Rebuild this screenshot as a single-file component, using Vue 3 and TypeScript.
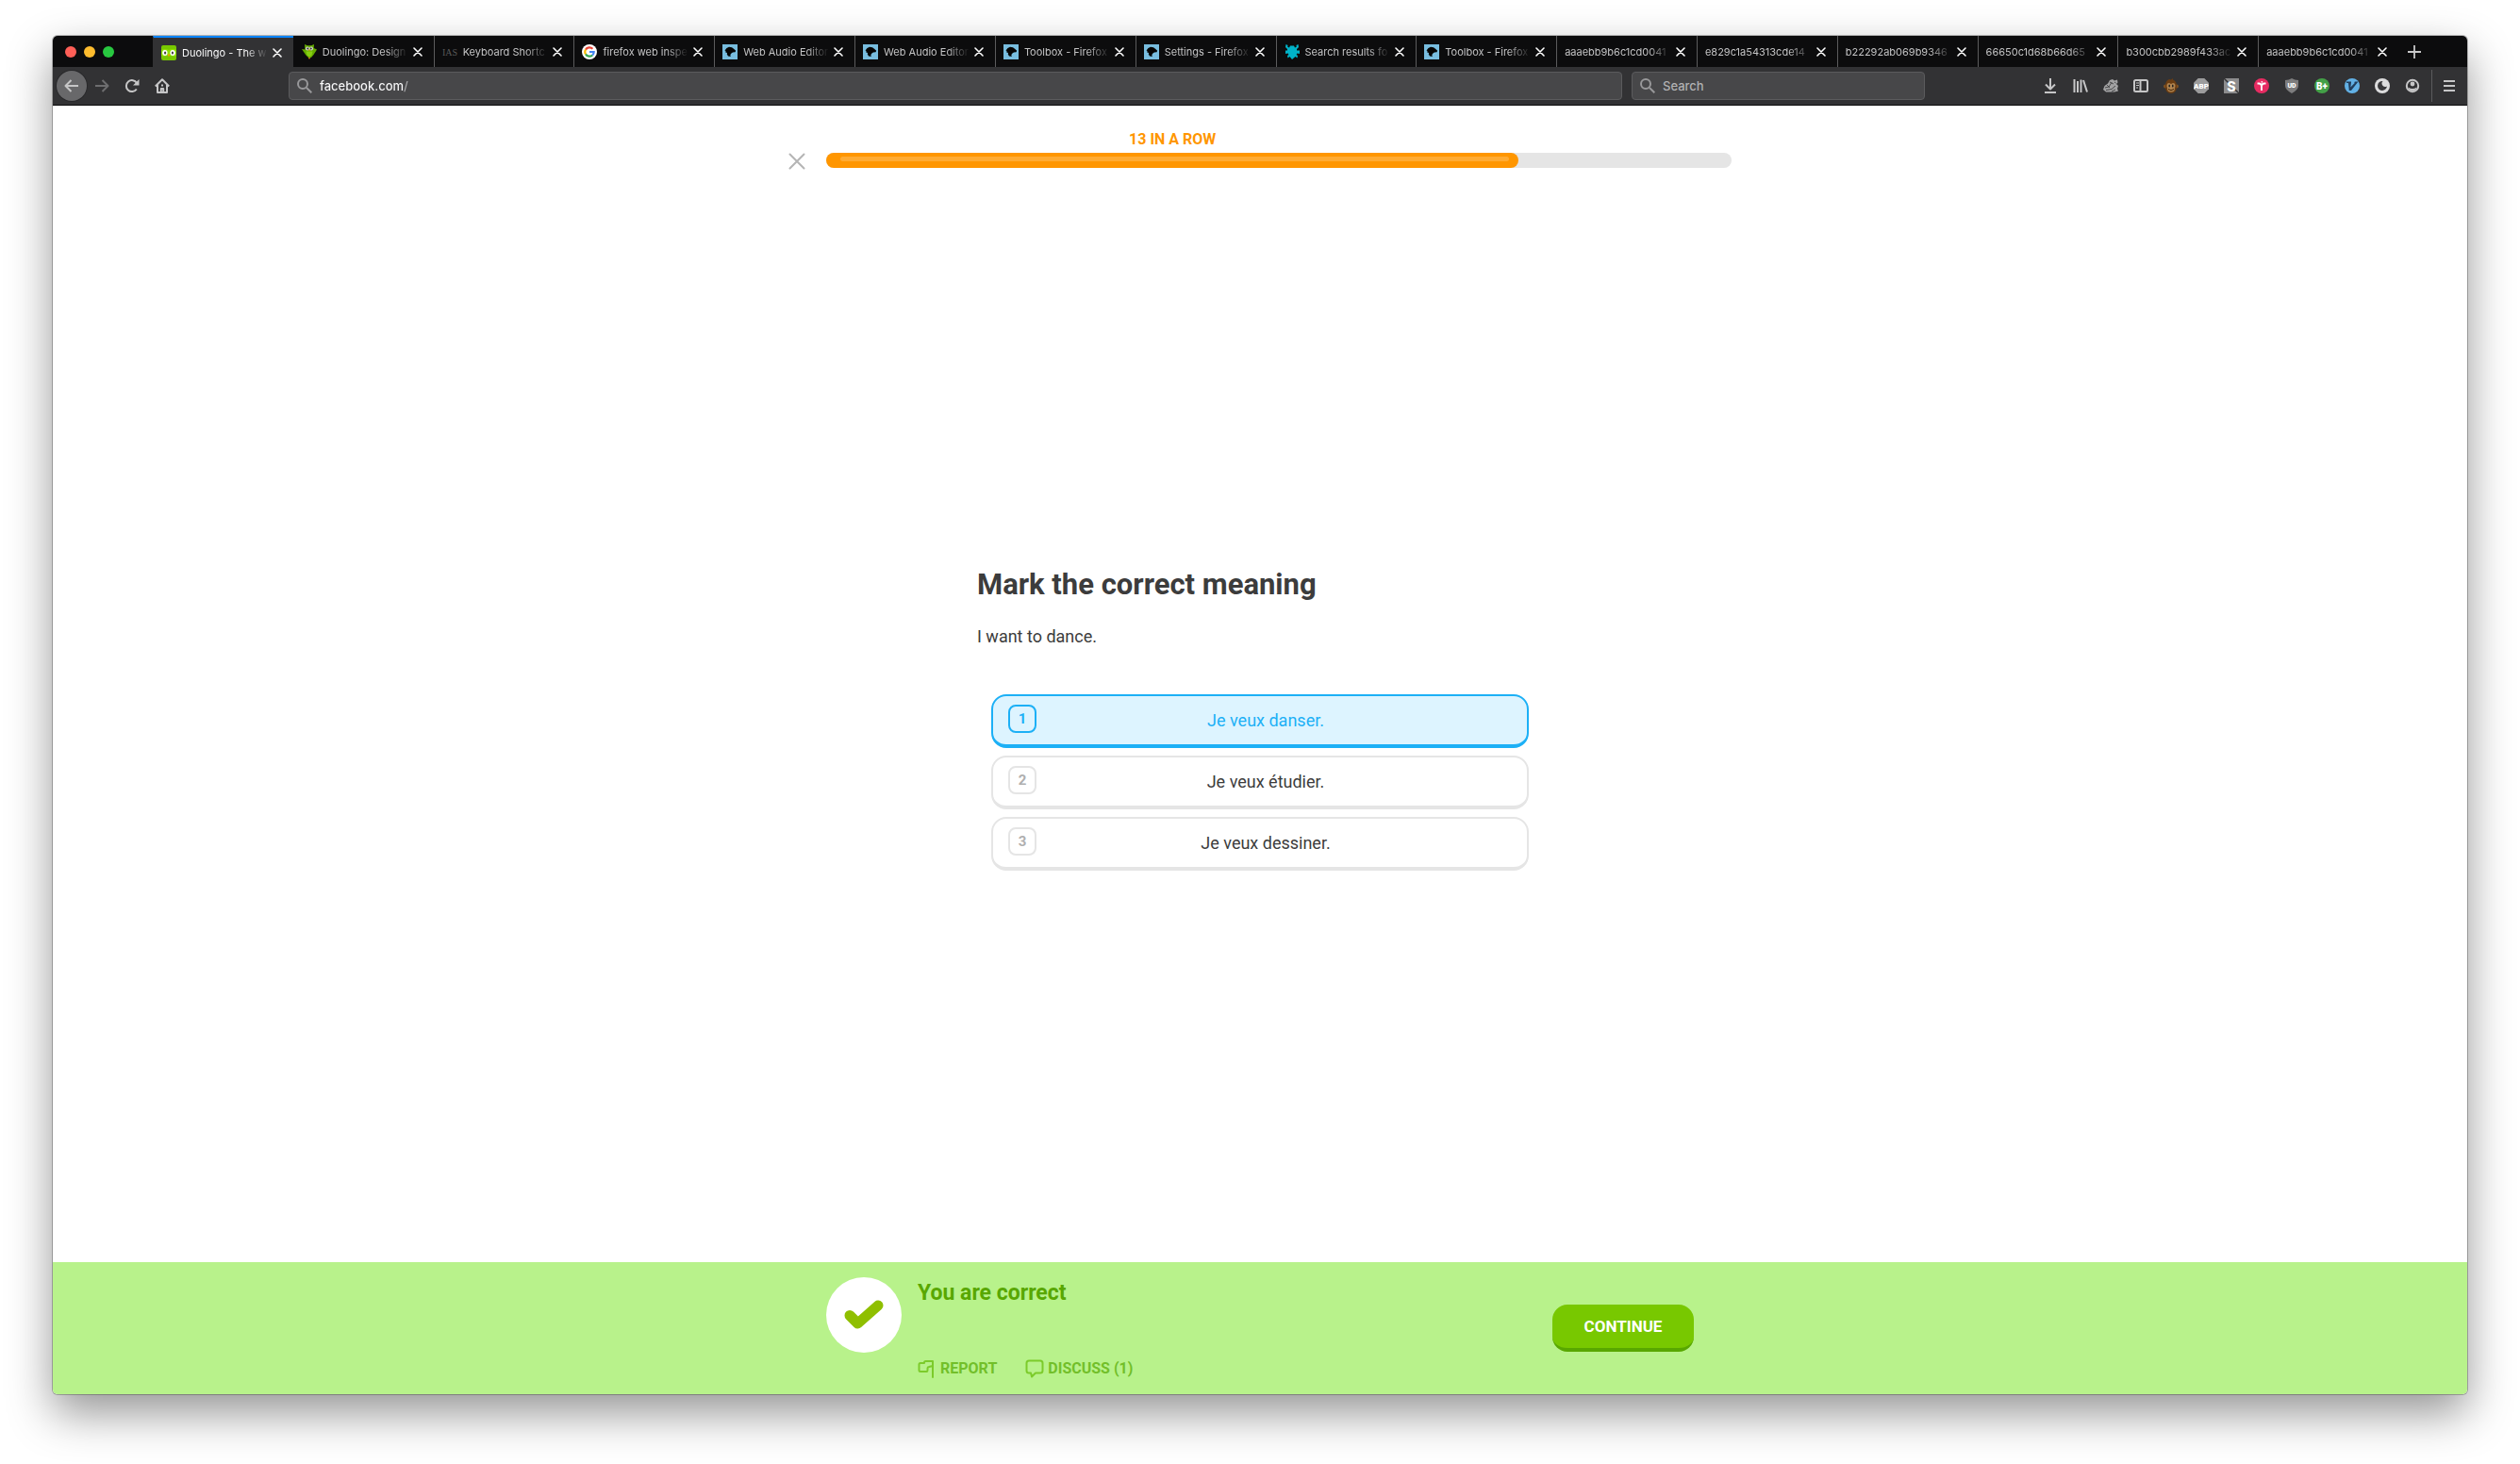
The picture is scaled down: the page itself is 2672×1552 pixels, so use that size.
<script setup lang="ts">
import { ref } from 'vue'

type Icon = 'duo' | 'owl' | 'ias' | 'google' | 'dino' | 'bug' | ''
interface Tab { title: string; icon: Icon }

const tabs: Tab[] = [
  { title: 'Duolingo - The w', icon: 'duo' },
  { title: 'Duolingo: Design', icon: 'owl' },
  { title: 'Keyboard Shortc', icon: 'ias' },
  { title: 'firefox web inspe', icon: 'google' },
  { title: 'Web Audio Editor', icon: 'dino' },
  { title: 'Web Audio Editor', icon: 'dino' },
  { title: 'Toolbox - Firefox', icon: 'dino' },
  { title: 'Settings - Firefox', icon: 'dino' },
  { title: 'Search results fo', icon: 'bug' },
  { title: 'Toolbox - Firefox', icon: 'dino' },
  { title: 'aaaebb9b6c1cd0041', icon: '' },
  { title: 'e829c1a54313cde14', icon: '' },
  { title: 'b22292ab069b9346', icon: '' },
  { title: '66650c1d68b66d65', icon: '' },
  { title: 'b300cbb2989f433ac', icon: '' },
  { title: 'aaaebb9b6c1cd0041', icon: '' },
]
const active = ref(0)
const url = ref('facebook.com/')
const query = ref('')
const choices = ['Je veux danser.', 'Je veux étudier.', 'Je veux dessiner.']
const picked = ref(0)
const progress = 76.5
</script>

<template>
  <div class="desktop">
    <div class="window">
      <header class="tabbar">
        <div class="lights"><i class="red"></i><i class="yellow"></i><i class="green"></i></div>
        <div class="tabs">
          <div v-for="(tab, i) in tabs" :key="i" class="tab" :class="{ active: i === active }" @click="active = i">
            <svg v-if="tab.icon === 'duo'" class="fav" viewBox="0 0 16 16">
              <rect width="16" height="16" rx="2" fill="#78c800" />
              <path d="M0 6q0-2 3.500-2Q7 4 8 5q1-1 4.500-1Q16 4 16 6v4q0 1.500-3 1.500-2.500 0-5-1.500-2.500 1.500-5 1.500-3 0-3-1.500z" fill="#8ee000" />
              <ellipse cx="3.900" cy="8" rx="2.700" ry="3" fill="#fff" /><ellipse cx="12.100" cy="8" rx="2.700" ry="3" fill="#fff" />
              <ellipse cx="4.100" cy="8" rx="1.100" ry="1.500" fill="#444" /><ellipse cx="11.900" cy="8" rx="1.100" ry="1.500" fill="#444" />
              <path d="M6.800 9.500h2.400L8 12.500z" fill="#ff9600" />
            </svg>
            <svg v-else-if="tab.icon === 'owl'" class="fav" viewBox="0 0 16 16">
              <path d="M3 0l3 1.200h4L13 0l-.3 4L16 5.500 12.500 11 10 14H7L4 11 0 5l3.400.5z" fill="#65ab00" />
              <path d="M4.500 7.500h7l-1 4-2.500 2-2.500-2z" fill="#87cf10" />
              <circle cx="6" cy="4.500" r="1.900" fill="#ddd" /><circle cx="10" cy="4.500" r="1.900" fill="#ddd" />
              <circle cx="6.300" cy="4.500" r="1" fill="#333" /><circle cx="9.700" cy="4.500" r="1" fill="#333" />
              <path d="M7 5.500h2L8 7.500zM7 14h2l-1 2z" fill="#f7931e" />
            </svg>
            <svg v-else-if="tab.icon === 'ias'" class="fav" viewBox="0 0 16 16">
              <text x="8" y="12" text-anchor="middle" font-family="Liberation Serif, serif" font-size="10" fill="#5a5a5a">IAS</text>
            </svg>
            <svg v-else-if="tab.icon === 'google'" class="fav" viewBox="0 0 16 16">
              <circle cx="8" cy="8" r="8" fill="#fff" />
              <g fill="none" stroke-width="2.200">
                <path d="M11.400 4.700A4.700 4.700 0 0 0 4 5.600" stroke="#ea4335" />
                <path d="M4 5.500a4.700 4.700 0 0 0 0 5" stroke="#fbbc05" />
                <path d="M4 10.400a4.700 4.700 0 0 0 7.200 1.100" stroke="#34a853" />
                <path d="M8 8h4.700a4.700 4.700 0 0 1-1.500 3.500" stroke="#4285f4" />
              </g>
            </svg>
            <svg v-else-if="tab.icon === 'dino'" class="fav" viewBox="0 0 16 16">
              <path fill="#78bddf" d="M0 0h16v16H0z" />
              <path d="M2.500 6.500L4.500 4 7 2.800l3 .4 2 1.500 2.200 2-.7 1.600-2.500.2-1.800 1.200-.9 1.500L8.800 13 6 12.500 4.800 10.500 5 9 3.300 8.500 3.500 7z" fill="#050505" />
            </svg>
            <svg v-else-if="tab.icon === 'bug'" class="fav" viewBox="0 0 16 16">
              <path d="M1.500 0l2 1-.2 1.800L5 3.500 6 1.500h4L11 3.500l1.700-.7-.2-1.800 2-1 .5 3-2 2v1.500h3V10l-2.500-.5-1 1.500 1.500 1-.5 2.500-2-1.500L8 16l-2.500-3-2 1.500L3 12l1.500-1-1-1.500L1 10V6.500h2V5L1 3z" fill="#00b3c8" />
            </svg>
            <span class="title">{{ tab.title }}</span>
            <button class="close" aria-label="Close tab">
              <svg viewBox="0 0 10 10"><path d="M1 1l8 8M9 1L1 9" fill="none" stroke="#fff" stroke-width="1.600" stroke-linecap="round" /></svg>
            </button>
          </div>
        </div>
        <button class="newtab" aria-label="New tab">
          <svg viewBox="0 0 14 14"><path d="M7 0v14M0 7h14" stroke="#c8c8c9" stroke-width="1.800" /></svg>
        </button>
      </header>

      <nav class="toolbar">
        <div class="navs">
          <button class="nav back" aria-label="Back"><svg viewBox="0 0 16 16"><path d="M15 8H1.500M7.500 2l-6 6 6 6" class="line" /></svg></button>
          <button class="nav forward" aria-label="Forward"><svg viewBox="0 0 16 16"><path d="M1 8h13.500M8.500 2l6 6-6 6" class="line" /></svg></button>
          <button class="nav" aria-label="Reload"><svg viewBox="0 0 16 16"><path d="M12.800 11.500A6 6 0 1 1 13 5" class="line" /><path d="M15.500 1v6.500H9z" fill="#c6c6c7" /></svg></button>
          <button class="nav" aria-label="Home"><svg viewBox="0 0 16 16"><path d="M.8 8.500L8 1.300l7.200 7.200M3 7v8h10V7M6.800 15v-4h2.400v4M7 7.500h2" class="line" /></svg></button>
        </div>
        <label class="field urlfield">
          <svg viewBox="0 0 16 16"><circle cx="6" cy="6" r="5" /><path d="M10 10l5.300 5.300" /></svg>
          <input v-model="url" class="url" type="text" aria-label="Address" />
        </label>
        <label class="field searchfield">
          <svg viewBox="0 0 16 16"><circle cx="6" cy="6" r="5" /><path d="M10 10l5.300 5.300" /></svg>
          <input v-model="query" type="text" placeholder="Search" aria-label="Search" />
        </label>
        <div class="tools">
          <button class="tool" aria-label="Downloads"><svg viewBox="0 0 16 16"><path d="M8 0v11M3 6.500l5 5 5-5M2 15h12" class="line" /></svg></button>
          <button class="tool" aria-label="Library"><svg viewBox="0 0 16 16"><path d="M1.500 1v14M5 3v12M8.500 1.500V15M11 2l4 12.500" class="line" /></svg></button>
          <button class="tool" aria-label="Extension"><svg viewBox="0 0 16 16"><path d="M0 12l1.500-4L5 5.500 7 2l3-1 2 1.500 3-1 .5 3L14 6l2 2-1 3 1 2.500-4 1H3z" fill="#a2a2a3" /><path d="M2 10l4-1 3-4.500M3 12.500l6-1 4-3.500M7 4l4 2M9 14l4-2M4 7l3 3M12 4l1.500 1" stroke="#48484a" fill="none" /></svg></button>
          <button class="tool" aria-label="Sidebar"><svg viewBox="0 0 16 16"><rect x="1" y="2" width="14" height="12" rx="1.500" class="line" /><path d="M7.500 2v12" class="line" /><path d="M3 5h3M3 7.500h3M3 10h2" stroke="#c6c6c7" /></svg></button>
          <button class="tool" aria-label="Greasemonkey"><svg viewBox="0 0 16 16"><circle cx="2" cy="8.500" r="2" fill="#80501f" /><circle cx="14" cy="8.500" r="2" fill="#80501f" /><path d="M6 1l2 .5L10 0v1.500q4 1.500 4 6.500 0 8-6 8T2 8q0-5.500 4-7z" fill="#6b3d12" /><path d="M3.500 8q0-3 2.500-3l2 1 2-1q2.500 0 2.500 3 0 1.500-.5 2 .3 4.500-4 4.500T4 10q-.5-.5-.5-2z" fill="#b08450" /><ellipse cx="6.200" cy="8" rx=".8" ry="1.500" fill="#1d1d1d" /><ellipse cx="9.800" cy="8" rx=".8" ry="1.500" fill="#1d1d1d" /><path d="M5 11.500q3 2.500 6 0" stroke="#432506" fill="none" /></svg></button>
          <button class="tool" aria-label="Adblock Plus"><svg viewBox="0 0 16 16"><path d="M4.700 0h6.600L16 4.700v6.600L11.300 16H4.700L0 11.300V4.700z" fill="#9c9c9d" /><text x="8" y="11" font-size="8">ABP</text></svg></button>
          <button class="tool" aria-label="Stylish"><svg viewBox="0 0 16 16"><path d="M0 0h16v16H0z" fill="#8d8d8e" /><path d="M0 0l16 16" stroke="#323234" stroke-width="1.500" /><text x="8" y="13.500" font-size="15">S</text></svg></button>
          <button class="tool" aria-label="Tree extension"><svg viewBox="0 0 16 16"><circle cx="8" cy="8" r="8" fill="#e72c62" /><path d="M8 13V8M3.500 5.500h2Q8 6 8 8.500q0-2.500 2.500-3h2" fill="none" stroke="#fff" stroke-width="1.800" /><circle cx="8.300" cy="3.800" r=".9" fill="#fff" /></svg></button>
          <button class="tool" aria-label="uBlock"><svg viewBox="0 0 16 16"><path d="M8 0q3 2 7 2v6q0 4-7 8-7-4-7-8V2q4 0 7-2z" fill="#7d7d7e" /><text x="8" y="9.500" font-size="7">UD</text></svg></button>
          <button class="tool" aria-label="B plus"><svg viewBox="0 0 16 16"><circle cx="8" cy="8" r="8" fill="#43a047" /><text x="8" y="11.500" font-size="10">B+</text></svg></button>
          <button class="tool" aria-label="Vimium"><svg viewBox="0 0 16 16"><circle cx="8" cy="8" r="8" fill="#62b1e5" /><path d="M2 3.500h5v1.200L6.300 9.500 11 4.700l-1-.2 1-1h3.500L7 13H4.800L4 5H2z" fill="#223f5d" /></svg></button>
          <button class="tool" aria-label="Dark mode"><svg viewBox="0 0 16 16"><circle cx="8" cy="8" r="8" fill="#dcdcdd" /><path d="M8.500 3A5 5 0 1 0 13 8.500 3.600 3.600 0 0 1 8.500 3z" fill="#39393b" /></svg></button>
          <button class="tool" aria-label="Account"><svg viewBox="0 0 16 16"><circle cx="8" cy="8" r="6.200" fill="none" stroke="#c6c6c7" stroke-width="2" /><circle cx="8" cy="6" r="2.400" fill="#c6c6c7" /><path d="M3.500 9.500q4.500 3 9 0-.5 4-4.500 4t-4.500-4z" fill="#c6c6c7" /></svg></button>
        </div>
        <button class="menu" aria-label="Menu"><svg viewBox="0 0 16 16"><path d="M2 3h12M2 8h12M2 13h12" class="line" /></svg></button>
      </nav>

      <main class="lesson">
        <div class="top">
          <button class="quit" aria-label="Quit"><svg viewBox="0 0 18 18"><path d="M1.500 1.500l15 15M16.500 1.500l-15 15" stroke="#b5b5b5" stroke-width="2" stroke-linecap="round" /></svg></button>
          <div class="track-wrap">
            <div class="streak" :style="{ width: progress + '%' }">13 IN A ROW</div>
            <div class="track" role="progressbar" :aria-valuenow="progress">
              <div class="fill" :style="{ width: progress + '%' }"><div class="shine"></div></div>
            </div>
          </div>
        </div>

        <section class="challenge">
          <h1>Mark the correct meaning</h1>
          <p>I want to dance.</p>
          <div class="choices">
            <label v-for="(c, i) in choices" :key="c" class="choice" :class="{ selected: picked === i }">
              <input v-model="picked" type="radio" name="choice" :value="i" />
              <span class="num">{{ i + 1 }}</span>
              <span class="answer">{{ c }}</span>
            </label>
          </div>
        </section>
      </main>

      <footer class="result">
        <div class="result-inner">
          <div class="badge"><svg viewBox="0 0 42 32"><path d="M6 16.500l8.500 8.500L36 6" fill="none" stroke="#8fbf00" stroke-width="11" stroke-linecap="round" stroke-linejoin="round" /></svg></div>
          <div class="message">
            <h2>You are correct</h2>
            <div class="links">
              <a href="#report"><svg viewBox="0 0 20 20"><path d="M16 19V2H8.500Q7 2 7 3.500V4H3Q1.500 4 1.500 5.500v6Q1.500 13 3 13h6.500q1 0 1-1.500V9.500q0-1.200 1.500-1.500l4-1" /></svg>REPORT</a>
              <a href="#discuss"><svg viewBox="0 0 20 20"><path d="M4 1.500h12q2.500 0 2.500 2.500v8q0 2.500-2.500 2.500h-5L7 18.500 6 14.500H4Q1.500 14.500 1.500 12V4Q1.500 1.500 4 1.500z" /></svg>DISCUSS (1)</a>
            </div>
          </div>
          <button class="continue">CONTINUE</button>
        </div>
      </footer>
    </div>
  </div>
</template>

<style>
body { background: #fff; }
</style>

<style scoped>
* { box-sizing: border-box; }
button { border: 0; padding: 0; background: none; font: inherit; cursor: pointer; }
svg { display: block; flex: none; }
.desktop { display: flex; min-height: 100vh; padding: 38px 56px 74px; font-family: Roboto, "Liberation Sans", sans-serif; overflow: hidden; }
.window { flex: 1; min-width: 0; display: flex; flex-direction: column; background: #fff; border-radius: 5px; box-shadow: 0 0 0 1px rgba(0, 0, 0, .25), 0 20px 48px rgba(0, 0, 0, .42); }

.tabbar { display: flex; height: 33px; background: #0c0c0d; border-radius: 5px 5px 0 0; font-family: Inter, "Liberation Sans", sans-serif; overflow: hidden; }
.lights { width: 106px; display: flex; align-items: center; gap: 8px; padding-left: 13px; }
.lights i { width: 12px; height: 12px; border-radius: 50%; }
.red { background: #ff5f57; }
.yellow { background: #febc2e; }
.green { background: #28c840; }
.tabs { flex: 1; display: flex; min-width: 0; }
.tab { flex: 1 1 0; min-width: 0; display: flex; align-items: center; padding: 1px 12px 0 8px; border-left: 1px solid #5c5c5d; color: #c4c4c5; font-size: 11px; }
.tab.active { background: #323234; border-top: 2px solid #0a84ff; border-left-color: #323234; padding-top: 0; color: #f9f9fa; }
.tab.active + .tab { border-left-color: #0c0c0d; }
.fav { width: 16px; height: 16px; margin-right: 6px; }
.title { flex: 1; min-width: 0; overflow: hidden; white-space: nowrap; line-height: 16px; mask-image: linear-gradient(90deg, #000 calc(100% - 24px), transparent); }
.close { width: 10px; margin-left: 5px; }
.close svg { width: 10px; height: 10px; }
.newtab { width: 73px; padding-left: 10px; }
.newtab svg { width: 14px; height: 14px; }

.toolbar { display: flex; align-items: center; height: 41px; padding: 0 11px 0 4px; background: #323234; border-bottom: 1px solid #0c0c0d; font-family: Inter, "Liberation Sans", sans-serif; }
.line { fill: none; stroke: #c6c6c7; stroke-width: 2; stroke-linejoin: round; }
.navs { display: flex; width: 246px; }
.nav { width: 32px; height: 32px; display: grid; place-items: center; }
.nav svg, .tool svg, .menu svg, .field svg { width: 16px; height: 16px; }
.back { border-radius: 50%; background: #68686a; box-shadow: 0 0 0 1px #29292b; }
.forward { opacity: .4; }
.field { display: flex; align-items: center; gap: 8px; height: 30px; padding: 0 8px; border: 1px solid #5b5b5d; border-radius: 4px; background: #474749; }
.field svg { fill: none; stroke: #98989a; stroke-width: 2; }
.field input { flex: 1; min-width: 0; border: 0; padding: 0; outline: 0; background: none; color: #f9f9fa; font: 500 13px/20px Inter, "Liberation Sans", sans-serif; }
.field input::placeholder { color: #b1b1b3; opacity: 1; }
.field .url { background: linear-gradient(90deg, #f9f9fa 89px, #a9a9ab 89px); background-clip: text; color: transparent; }
.urlfield { flex: 1396 1 0; }
.searchfield { flex: 293 1 0; margin-left: 10px; }
.tools { display: flex; margin-left: 117px; padding-right: 4px; border-right: 1px solid #5b5b5d; height: 34px; align-items: center; }
.tool { width: 32px; height: 32px; display: grid; place-items: center; }
.tool text { fill: #fff; font-family: Roboto, sans-serif; font-weight: 900; text-anchor: middle; }
.menu { margin-left: 10px; }

.lesson { flex: 1; display: flex; flex-direction: column; align-items: center; }
.top { width: 100%; max-width: 1000px; display: flex; align-items: flex-end; gap: 22px; padding-top: 26px; }
.quit svg { width: 18px; height: 18px; }
.track-wrap { flex: 1; padding-bottom: 2px; }
.streak { text-align: center; color: #ff9600; font-size: 16px; font-weight: 700; line-height: 20px; margin-bottom: 4px; }
.track { height: 16px; border-radius: 8px; background: #e5e5e5; }
.fill { height: 16px; border-radius: 8px; background: #ff9600; padding: 4px 10px 0 15px; }
.shine { height: 5px; border-radius: 3px; background: #ffab33; }

.challenge { flex: 1; width: 100%; max-width: 600px; display: flex; flex-direction: column; justify-content: center; color: #3c3c3c; padding-top: 4px; }
h1 { margin: 0; font-size: 31px; line-height: 42px; font-weight: 700; }
p { margin: 22px 0 0; font-size: 18px; line-height: 24px; }
.choices { display: flex; flex-direction: column; gap: 8px; padding: 49px 15px 0; }
.choice { display: flex; height: 57px; padding: 9px 34px 0 16px; border: 2px solid #e5e5e5; border-bottom-width: 4px; border-radius: 16px; cursor: pointer; }
.choice input { position: absolute; opacity: 0; }
.num { width: 30px; height: 30px; border: 2px solid #e5e5e5; border-radius: 8px; text-align: center; line-height: 26px; font-size: 15px; font-weight: 700; color: #afafaf; }
.answer { flex: 1; text-align: center; font-size: 18px; line-height: 34px; }
.selected { background: #ddf4ff; border-color: #1cb0f6; color: #1cb0f6; }
.selected .num { border-color: #1cb0f6; color: #1cb0f6; }

.result { height: 140px; background: #b8f28b; border-radius: 0 0 5px 5px; display: flex; justify-content: center; }
.result-inner { width: 100%; max-width: 920px; display: flex; padding-top: 16px; }
.badge { width: 80px; height: 80px; border-radius: 50%; background: #fff; display: grid; place-items: center; }
.badge svg { width: 42px; height: 32px; }
.message { flex: 1; padding-left: 17px; }
h2 { margin: 0; font-size: 23px; line-height: 34px; font-weight: 700; color: #58a700; }
.links { display: flex; gap: 30px; margin-top: 53px; }
.links a { display: flex; align-items: center; gap: 4px; color: #72bf2a; font-size: 16px; line-height: 20px; font-weight: 700; text-decoration: none; }
.links svg { width: 20px; height: 20px; fill: none; stroke: #7ccb2b; stroke-width: 2; stroke-linejoin: round; stroke-linecap: round; }
.continue { width: 150px; height: 50px; margin-top: 29px; border-radius: 16px; border-bottom: 4px solid #58a700; background: #78c800; color: #fff; font-size: 17px; font-weight: 700; }
</style>
